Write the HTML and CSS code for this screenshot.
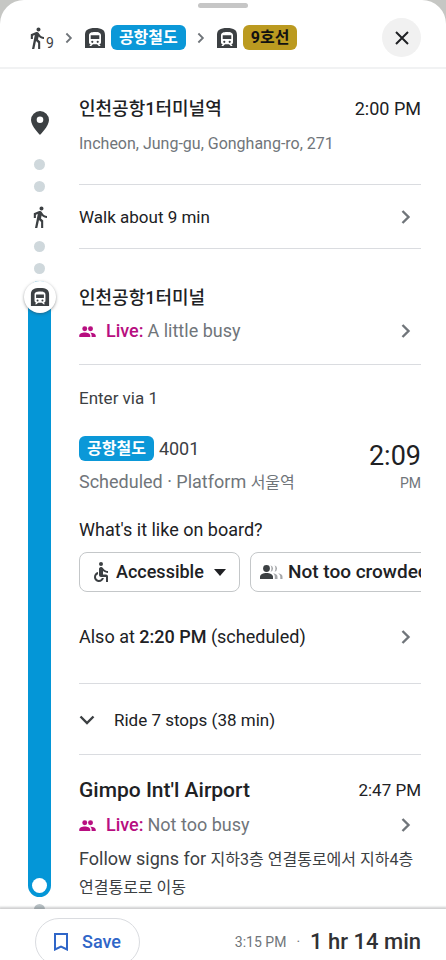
FILE: index.html
```html
<!DOCTYPE html>
<html lang="en">
<head>
<meta charset="utf-8">
<meta name="viewport" content="width=device-width, initial-scale=1">
<title>Transit directions</title>
<link rel="stylesheet" href="styles.css">
</head>
<body>
<svg class="symbols" aria-hidden="true">
  <symbol id="walk" viewBox="0 0 24 24"><path d="M13.500 5.500c1.100 0 2-.9 2-2s-.9-2-2-2-2 .9-2 2 .9 2 2 2zM9.800 8.900L7 23h2.300l1.700-8 2.100 2v6h2.100v-7.500l-2.200-2 .6-3C14.900 12 16.800 13 19 13v-2c-1.900 0-3.500-1-4.300-2.400l-1-1.600c-.4-.6-1-1-1.700-1-.3 0-.5.1-.8.1L5.800 8.300V13h2.100V9.700l1.900-.8"/></symbol>
  <symbol id="train" viewBox="0 0 22 22"><path fill-rule="evenodd" d="M1 21V8C1 3 4 1 11 1s10 2 10 7v13zM5 8.500v6.700c0 1.200.8 2 1.900 2.100L5.600 18.600V19h1.600l1.700-1.700h4.200l1.700 1.700h1.600v-.4l-1.300-1.300c1.100-.1 1.900-.9 1.900-2.100V8.500C17 5.700 14.500 5 11 5S5 5.700 5 8.500zM6.700 8.200h8.600v3.900H6.700zM8.300 13.700a1.100 1.100 0 1 1 0 2.200 1.100 1.100 0 0 1 0-2.200zM13.700 13.700a1.100 1.100 0 1 1 0 2.200 1.100 1.100 0 0 1 0-2.200z"/></symbol>
  <symbol id="chevron" viewBox="0 0 10 16"><path d="M1.500 2l6 6-6 6" fill="none" stroke="currentColor" stroke-width="2.400"/></symbol>
  <symbol id="people" viewBox="0 0 18 12"><circle cx="6" cy="3" r="2.700"/><circle cx="12.300" cy="3" r="2.700"/><path d="M0 12v-1.600C0 8.200 3 7 6 7s6 1.200 6 3.400V12zM13.500 12v-1.700c0-1.300-.6-2.300-1.600-3C14.800 7 18 8.200 18 10.400V12z"/></symbol>
</svg>
<div class="sheet">
  <header class="header">
    <div class="handle"></div>
    <div class="summary">
      <svg class="icon-walk"><use href="#walk"/></svg><span class="walk-min">9</span>
      <svg class="sep"><use href="#chevron"/></svg>
      <svg class="icon-train"><use href="#train"/></svg><span class="line line-blue">공항철도</span>
      <svg class="sep"><use href="#chevron"/></svg>
      <svg class="icon-train"><use href="#train"/></svg><span class="line line-gold">9호선</span>
    </div>
    <button class="close" type="button" aria-label="Close"><svg viewBox="0 0 14 14"><path d="M1 1l12 12M13 1L1 13" fill="none" stroke="currentColor" stroke-width="2"/></svg></button>
  </header>

  <main class="route">
    <section class="leg leg-origin">
      <div class="rail">
        <svg class="pin" viewBox="0 0 18 24"><path fill-rule="evenodd" d="M9 0a9 9 0 0 0-9 9c0 6 9 15 9 15s9-9 9-15a9 9 0 0 0-9-9zm0 5.500a3.300 3.300 0 1 1 0 6.600 3.300 3.300 0 0 1 0-6.600z"/></svg>
        <i class="dot"></i><i class="dot"></i>
      </div>
      <div class="body">
        <div class="split"><h2 class="stop">인천공항1터미널역</h2><time class="time">2:00 PM</time></div>
        <p class="address">Incheon, Jung-gu, Gonghang-ro, 271</p>
        <hr>
      </div>
    </section>

    <section class="leg leg-walk">
      <div class="rail">
        <svg class="icon-walk"><use href="#walk"/></svg>
        <i class="dot"></i><i class="dot"></i>
      </div>
      <div class="body">
        <button class="row" type="button">Walk about 9 min<svg class="go"><use href="#chevron"/></svg></button>
        <hr>
      </div>
    </section>

    <section class="leg leg-ride">
      <div class="rail">
        <div class="track"><span class="badge"><svg><use href="#train"/></svg></span><i class="end"></i></div>
        <i class="dot"></i>
      </div>
      <div class="body">
        <h2 class="stop">인천공항1터미널</h2>
        <button class="row live" type="button"><svg class="people"><use href="#people"/></svg><b>Live:</b><span>A little busy</span><svg class="go"><use href="#chevron"/></svg></button>
        <hr>
        <p class="enter">Enter via 1</p>
        <div class="departure">
          <div>
            <p class="train-name"><span class="line line-blue">공항철도</span>4001</p>
            <p class="platform">Scheduled · Platform <span lang="ko">서울역</span></p>
          </div>
          <time class="big-time">2:09<small>PM</small></time>
        </div>
        <p class="question">What's it like on board?</p>
        <div class="chips">
          <label class="chip">
            <svg class="wheelchair" viewBox="4 2 16 20"><circle cx="12" cy="4" r="2"/><path d="M19 13v-2c-1.540.02-3.090-.75-4.070-1.830l-1.290-1.430c-.17-.19-.38-.34-.61-.45H13c-.35-.2-.75-.3-1.190-.26C10.760 7.110 10 8.040 10 9.090V15c0 1.100.9 2 2 2h5v5h2v-5.500c0-1.100-.9-2-2-2h-3v-3.450c1.290 1.070 3.250 1.940 5 1.950zm-6.170 5c-.41 1.160-1.520 2-2.830 2-1.660 0-3-1.340-3-3 0-1.310.84-2.410 2-2.830V12.100c-2.280.46-4 2.480-4 4.900 0 2.760 2.240 5 5 5 2.420 0 4.440-1.720 4.900-4z"/></svg>
            <select aria-label="Accessibility"><option>Accessible</option></select>
            <svg class="caret" viewBox="0 0 12 7"><path d="M0 0h12L6 7z"/></svg>
          </label>
          <button class="chip crowd" type="button">
            <svg class="crowding" viewBox="0 0 23 14"><circle cx="6.500" cy="3.500" r="3.400"/><path d="M0 14v-2.200C0 9.300 3.300 8 6.500 8s6.500 1.300 6.500 3.800V14z"/><g fill="#a5a7aa"><path d="M10.500.2a3.400 3.400 0 0 1 0 6.600c1.300-2 1.300-4.600 0-6.600zM14.500.2a3.400 3.400 0 0 1 0 6.600c1.300-2 1.300-4.600 0-6.600zM13 8.300c3 .5 4.500 1.700 4.500 3.500V14h-2.700v-2.200c0-1.400-.6-2.500-1.800-3.500zM18 8.300c3 .5 4.500 1.700 4.500 3.500V14h-2.200v-2.200c0-1.400-.9-2.500-2.300-3.500z"/></g></svg>
            Not too crowded
          </button>
        </div>
        <button class="row also" type="button"><span>Also at <b>2:20 PM</b> (scheduled)</span><svg class="go"><use href="#chevron"/></svg></button>
        <hr>
        <button class="row stops" type="button"><svg class="expand" viewBox="0 0 16 10"><path d="M1.500 1.500L8 8l6.500-6.500" fill="none" stroke="currentColor" stroke-width="2.400"/></svg>Ride 7 stops (38 min)</button>
        <hr>
        <div class="split arrive"><h2 class="stop">Gimpo Int'l Airport</h2><time class="time">2:47 PM</time></div>
        <button class="row live" type="button"><svg class="people"><use href="#people"/></svg><b>Live:</b><span>Not too busy</span><svg class="go"><use href="#chevron"/></svg></button>
        <p class="signs">Follow signs for <span lang="ko">지하3층 연결통로에서 지하4층 연결통로로 이동</span></p>
      </div>
    </section>
  </main>

  <footer class="footer">
    <button class="save" type="button"><svg viewBox="0 0 14 18"><path d="M1 1h12v15.500l-6-3-6 3z" fill="none" stroke="currentColor" stroke-width="2"/></svg>Save</button>
    <p class="total"><time>3:15 PM</time><span>·</span><strong>1 hr 14 min</strong></p>
  </footer>
</div>
</body>
</html>
```
FILE: styles.css
```css
* { box-sizing: border-box; }

body {
  margin: 0;
  background: #c6c7c4;
  color: #202124;
  font: 17px/24px Roboto, "Noto Sans CJK KR", sans-serif;
}

h2, p { margin: 0; }
svg { display: block; flex: none; fill: currentColor; }
.symbols { position: absolute; width: 0; height: 0; }

button, select {
  margin: 0;
  padding: 0;
  border: 0;
  background: none;
  color: inherit;
  font: inherit;
}

hr {
  margin: 0;
  border: 0;
  border-top: 1px solid #dadce0;
}

.sheet {
  display: flex;
  flex-direction: column;
  height: 100vh;
  overflow: hidden;
  border-radius: 24px 24px 0 0;
  background: #fff;
}

/* Header */
.header {
  flex: none;
  display: grid;
  grid-template-columns: 1fr auto;
  align-items: center;
  padding: 3px 25px 10px 28px;
  border-bottom: 2px solid #f1f2f3;
}

.handle {
  grid-column: 1 / -1;
  justify-self: center;
  width: 50px;
  height: 5px;
  margin: 0 3px 10px 0;
  border-radius: 3px;
  background: #c6c6c6;
}

.summary {
  display: flex;
  align-items: center;
  color: #3c4043;
}

.icon-walk { width: 24px; height: 24px; color: #3c4043; }
.summary .icon-walk { margin-left: -3px; }
.walk-min { margin: 10px 11px 0 -3px; font-size: 14px; line-height: 16px; }
.icon-train { width: 22px; height: 22px; margin-right: 5px; }
.sep { width: 8px; height: 12px; margin-right: 11px; color: #70757a; }
.line + .sep { margin-left: 11px; }

.line {
  display: inline-block;
  padding: 0 8px;
  border-radius: 6px;
  font-size: 16px;
  line-height: 25px;
  font-weight: 700;
}

.line-blue { background: #0b98d8; color: #fff; }
.line-gold { background: #bb9a20; color: #111; }

.close {
  display: grid;
  place-items: center;
  width: 39px;
  height: 39px;
  border-radius: 50%;
  background: #f1f1f1;
}

.close svg { width: 14px; height: 14px; }

/* Route */
.route {
  flex: 1;
  min-height: 0;
  overflow: hidden;
}

.leg {
  display: grid;
  grid-template-columns: 79px 1fr;
  padding-right: 25px;
}

.body { min-width: 0; }

.rail {
  display: flex;
  flex-direction: column;
  align-items: center;
  color: #3c4043;
}

.dot {
  width: 11px;
  height: 11px;
  border-radius: 50%;
  background: #cfd8dc;
}

.dot + .dot { margin-top: 11px; }

.split {
  display: flex;
  justify-content: space-between;
  align-items: center;
}

.stop { font-size: 18px; font-weight: 500; }
[lang="ko"] { font-size: 16px; }

.leg-origin .rail { padding-top: 42px; }
.leg-origin .body { padding: 28px 0 13px; }
.leg-origin .time { font-size: 18px; }
.pin { width: 18px; height: 24px; margin-bottom: 24px; }

.address {
  margin: 11px 0 28px;
  color: #70757a;
  font-size: 16px;
}

.leg-walk .rail { padding-top: 7px; }
.leg-walk .icon-walk { margin-bottom: 12px; }
.leg-walk .body { padding: 7px 0 32px; }
.leg-walk .row { margin-bottom: 19px; }

.row {
  display: flex;
  align-items: center;
  width: 100%;
  text-align: left;
}

.go {
  width: 10px;
  height: 16px;
  margin: 0 10px 0 auto;
  color: #70757a;
}

/* Ride */
.track {
  display: flex;
  flex: 1;
  flex-direction: column;
  justify-content: space-between;
  align-items: center;
  width: 23px;
  border-radius: 12px;
  background: #0496d7;
}

.track + .dot { flex: none; margin-top: 7px; margin-bottom: -7px; background: #b9c2c6; }

.badge {
  display: grid;
  place-items: center;
  width: 32px;
  height: 32px;
  border-radius: 50%;
  background: #fff;
  box-shadow: 0 1px 3px rgb(60 64 67 / 50%);
}

.badge svg { width: 20px; height: 20px; }

.end {
  width: 15px;
  height: 15px;
  margin-bottom: 4px;
  border-radius: 50%;
  background: #fff;
}

.leg-ride .body { padding: 5px 0 7px; }

.live { margin-top: 9px; color: #70757a; font-size: 18px; }
.live b { margin-right: 4px; color: #b80e80; font-weight: 500; }
.people { width: 17px; height: 11px; margin-right: 10px; color: #b80e80; }
.live + hr { margin-top: 21px; }

.enter { margin: 21px 0 26px; color: #3c4043; }

.departure {
  display: flex;
  justify-content: space-between;
  align-items: flex-start;
}

.train-name {
  display: flex;
  align-items: center;
  gap: 5px;
  color: #3c4043;
  font-size: 18px;
}

.platform { margin-top: 9px; color: #70757a; font-size: 18px; }

.big-time {
  padding-top: 4px;
  font-size: 27px;
  line-height: 32px;
  text-align: right;
}

.big-time small {
  display: block;
  color: #70757a;
  font-size: 14px;
  line-height: 22px;
}

.question { margin: 23px 0 10px; font-size: 18px; }

.chips {
  display: flex;
  gap: 10px;
  overflow: hidden;
}

.chip {
  display: flex;
  flex: none;
  align-items: center;
  height: 40px;
  padding: 0 13px;
  border: 1px solid #c4c7c9;
  border-radius: 8px;
  font-size: 18px;
  font-weight: 500;
}

.chip select { appearance: none; }
.crowd { padding-left: 9px; font-size: 19px; }
.wheelchair { width: 16px; height: 20px; margin-right: 7px; color: #3c4043; }
.caret { width: 12px; height: 7px; margin-left: 10px; }
.crowding { width: 23px; height: 14px; margin-right: 5px; color: #3c4043; }

.also { margin: 33px 0 34px; font-size: 18px; }
.also b { font-weight: 500; }
.stops { margin: 24px 0 22px; }
.expand { width: 16px; height: 10px; margin-right: 19px; color: #3c4043; }
.arrive { margin-top: 23px; }
.arrive .stop { font-size: 21px; }
.arrive + .live { margin-top: 11px; }
.signs { margin-top: 8px; color: #3c4043; font-size: 18px; line-height: 27px; }

/* Footer */
.footer {
  position: relative;
  flex: none;
  display: flex;
  justify-content: space-between;
  align-items: flex-start;
  height: 51px;
  padding: 9px 25px 0 35px;
  background: #fff;
  box-shadow: 0 -1px 2px 1px rgb(60 64 67 / 25%);
}

.save {
  display: flex;
  flex: none;
  align-items: center;
  gap: 14px;
  height: 48px;
  padding: 0 18px;
  border: 1px solid #dadce0;
  border-radius: 24px;
  color: #2f66c8;
  font-size: 18px;
  font-weight: 500;
}

.save svg { width: 14px; height: 18px; }

.total {
  display: flex;
  align-items: center;
  gap: 10px;
  height: 48px;
  color: #70757a;
  font-size: 14px;
}

.total strong { color: #303134; font-size: 22px; font-weight: 500; }
```
